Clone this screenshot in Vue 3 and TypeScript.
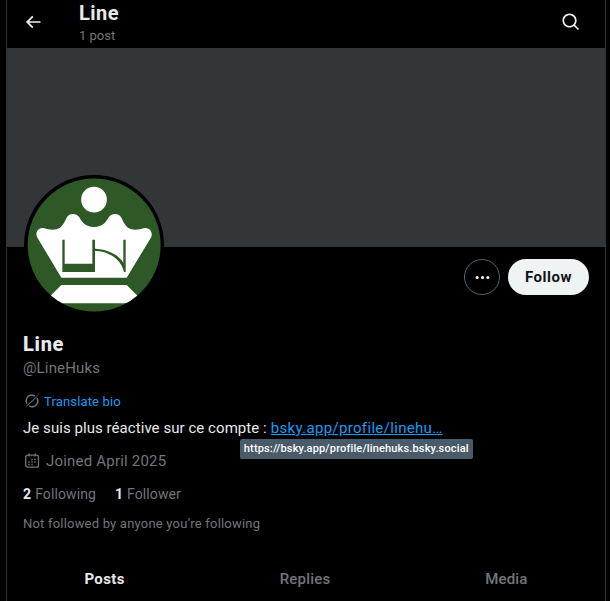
<script setup lang="ts">
interface Stat {
  count: number
  label: string
}

const profile = {
  name: 'Line',
  handle: '@LineHuks',
  posts: '1 post',
  bio: 'Je suis plus réactive sur ce compte :',
  link: 'bsky.app/profile/linehu…',
  url: 'https://bsky.app/profile/linehuks.bsky.social',
  joined: 'Joined April 2025',
}

const stats: Stat[] = [
  { count: 2, label: 'Following' },
  { count: 1, label: 'Follower' },
]

const tabs = ['Posts', 'Replies', 'Media']
const activeTab = 'Posts'
</script>

<template>
  <main class="column">
    <header class="topbar">
      <svg class="back" viewBox="0 0 24 24">
        <path d="M7.414 13l5.043 5.04-1.414 1.42L3.586 12l7.457-7.46 1.414 1.42L7.414 11H21v2H7.414z" />
      </svg>
      <div class="heading">
        <h2 class="heading-name">{{ profile.name }}</h2>
        <div class="heading-count">{{ profile.posts }}</div>
      </div>
      <svg class="search" viewBox="0 0 24 24">
        <path d="M10.25 3.75c-3.59 0-6.5 2.91-6.5 6.5s2.91 6.5 6.5 6.5c1.795 0 3.419-.726 4.596-1.904 1.178-1.177 1.904-2.801 1.904-4.596 0-3.59-2.91-6.5-6.5-6.5zm-8.5 6.5c0-4.694 3.806-8.5 8.5-8.5s8.5 3.806 8.5 8.5c0 1.986-.682 3.815-1.824 5.262l4.781 4.781-1.414 1.414-4.781-4.781c-1.447 1.142-3.276 1.824-5.262 1.824-4.694 0-8.5-3.806-8.5-8.5z" />
      </svg>
    </header>
    <div class="banner"></div>

    <section class="profile">
      <div class="actions-row">
        <svg class="avatar" viewBox="27 30 420 420">
          <defs>
            <clipPath id="avatar-disc"><circle cx="237.5" cy="240" r="199.5" /></clipPath>
          </defs>
          <circle cx="237" cy="240" r="210" fill="#000" />
          <g clip-path="url(#avatar-disc)">
            <rect x="27" y="30" width="420" height="420" fill="#2f5827" />
            <circle cx="237" cy="104" r="38.5" fill="#fff" />
            <path
              fill="#fff"
              d="M139 338L66 216C60 200 71 187 86 189C99 193 112 196 124 193C143 188 148 172 154 160C160 145 182 142 193 157C200 170 210 186 237 186C264 186 274 170 281 157C292 142 314 145 320 160C326 172 331 188 350 193C362 196 375 193 388 189C403 187 414 200 409 216L335 338Z"
            />
            <path fill="#fff" d="M139 360H335L386 411V415H88V411Z" />
            <path fill="#2f5827" d="M142 224H149V296H232V224H240V321H142Z" />
            <path fill="#2f5827" d="M325 224H332V321H327C320 286 284 258 240 258V251C278 252 310 269 325 293Z" />
          </g>
        </svg>
        <div class="actions">
          <button class="more" aria-label="More">
            <svg viewBox="0 0 24 24">
              <circle cx="4.4" cy="12" r="2.2" />
              <circle cx="12" cy="12" r="2.2" />
              <circle cx="19.6" cy="12" r="2.2" />
            </svg>
          </button>
          <button class="follow"><span>Follow</span></button>
        </div>
      </div>

      <h1 class="name"><span>{{ profile.name }}</span></h1>
      <div class="handle"><span>{{ profile.handle }}</span></div>

      <div class="translate">
        <svg viewBox="0 0 16 16">
          <path d="M10.9 3.1A5.6 5.6 0 0 0 3 10.6M5.2 12.9A5.6 5.6 0 0 0 12.9 5.2" />
          <path class="slash" d="M1.2 14.6C3.2 11.6 5 10.2 7 8.6L15 1.2C13 4.2 12 5.2 6.2 10.4" />
        </svg>
        <span>Translate bio</span>
      </div>

      <p class="bio">
        <span class="bio-text">{{ profile.bio }}</span>
        <span class="link-wrap">
          <a class="link">{{ profile.link }}</a>
          <span class="tooltip"><span>{{ profile.url }}</span></span>
        </span>
      </p>

      <div class="joined">
        <svg viewBox="0 0 18 18">
          <rect x="2.7" y="3.2" width="12.8" height="12" rx="2" />
          <path d="M6 1.5V4.5M12.2 1.5V4.5" />
          <path class="dots" d="M8.3 7.5H9.7M11.3 7.5H12.7M5.3 10H6.7M8.3 10H9.7M11.3 10H12.7M5.3 12.5H6.7M8.3 12.5H9.7" />
        </svg>
        <span>{{ profile.joined }}</span>
      </div>

      <div class="stats">
        <div v-for="stat in stats" :key="stat.label" class="stat">
          <b>{{ stat.count }}</b>
          <span>{{ stat.label }}</span>
        </div>
      </div>

      <div class="mutuals"><span>Not followed by anyone you’re following</span></div>
    </section>

    <nav class="tabs">
      <div v-for="tab in tabs" :key="tab" class="tab" :class="{ active: tab === activeTab }">
        <span>{{ tab }}</span>
      </div>
    </nav>
  </main>
</template>

<style>
body {
  background: #000;
  overflow: hidden;
}
</style>

<style scoped>
.column {
  box-sizing: border-box;
  width: 600px;
  height: 601px;
  margin-left: 6px;
  border: solid #2f3336;
  border-width: 0 1px;
  background: #000;
  color: #e7e9ea;
  font-family: Roboto, "Liberation Sans", sans-serif;
  font-size: 15px;
  overflow: hidden;
}
h1, h2, p {
  margin: 0;
}
.topbar {
  display: flex;
  height: 48px;
  box-sizing: border-box;
  padding: 0 24px 0 16px;
}
.back {
  width: 20px;
  height: 20px;
  margin-top: 12px;
  fill: #eff3f4;
}
.heading {
  flex: 1;
  margin-left: 36px;
}
.heading-name {
  font-size: 20px;
  line-height: 24px;
  font-weight: 700;
  margin-top: 1px;
  letter-spacing: 0.5px;
}
.heading-count {
  font-size: 13px;
  line-height: 16px;
  margin-top: 3px;
  color: #71767b;
}
.search {
  width: 20px;
  height: 20px;
  margin-top: 12px;
  fill: #eff3f4;
}
.banner {
  height: 199px;
  background: #333639;
}
.profile {
  padding: 0 16px;
}
.actions-row {
  display: flex;
  justify-content: space-between;
  height: 85px;
}
.avatar {
  width: 140px;
  height: 140px;
  margin: -72px 0 0 1px;
}
.actions {
  display: flex;
  gap: 8px;
  padding-top: 12px;
}
button {
  box-sizing: border-box;
  height: 36px;
  padding: 0;
  border-radius: 18px;
  font-family: inherit;
}
.more {
  display: flex;
  align-items: center;
  justify-content: center;
  width: 36px;
  border: 1px solid #536471;
  background: #000;
}
.more svg {
  width: 17px;
  height: 17px;
  fill: #eff3f4;
}
.follow {
  width: 81px;
  border: 0;
  background: #eff3f4;
  color: #0f1419;
  font-size: 15px;
  font-weight: 700;
  letter-spacing: 0.5px;
}
.name {
  font-size: 20px;
  line-height: 24px;
  font-weight: 800;
  letter-spacing: 0.7px;
}
.handle {
  line-height: 20px;
  margin-top: 2px;
  color: #71767b;
  letter-spacing: 0.15px;
}
.translate {
  display: flex;
  align-items: center;
  gap: 4px;
  height: 16px;
  margin-top: 15px;
  padding-left: 1px;
  color: #1d9bf0;
  font-size: 13px;
  letter-spacing: 0.15px;
}
.translate svg {
  width: 16px;
  height: 16px;
  fill: none;
  stroke: #71767b;
  stroke-width: 1.5;
}
.translate .slash {
  fill: #71767b;
  stroke: none;
}
.bio {
  display: flex;
  gap: 4px;
  height: 20px;
  line-height: 20px;
  margin-top: 9px;
  white-space: nowrap;
}
.bio-text {
  letter-spacing: 0.055px;
}
.link-wrap {
  position: relative;
}
.link {
  color: #1d9bf0;
  text-decoration: underline;
  letter-spacing: 0.33px;
}
.tooltip {
  position: absolute;
  top: 21px;
  left: -31px;
  box-sizing: border-box;
  width: 233px;
  height: 20px;
  border-radius: 2px;
  background: #495a69;
  color: #fff;
  font-size: 11px;
  font-weight: 500;
  line-height: 19px;
  text-align: center;
  letter-spacing: 0.15px;
}
.joined {
  display: flex;
  align-items: center;
  gap: 5px;
  height: 20px;
  margin-top: 13px;
  color: #71767b;
  letter-spacing: 0.2px;
}
.joined svg {
  width: 18px;
  height: 18px;
  fill: none;
  stroke: #71767b;
  stroke-width: 1.3;
}
.joined .dots {
  stroke-width: 1.4;
}
.stats {
  display: flex;
  gap: 19px;
  height: 20px;
  line-height: 20px;
  margin-top: 13px;
  font-size: 14px;
  letter-spacing: 0.1px;
}
.stat {
  display: flex;
  gap: 4px;
}
.stat span {
  color: #71767b;
}
.mutuals {
  height: 16px;
  line-height: 16px;
  margin-top: 12px;
  color: #71767b;
  font-size: 13px;
  letter-spacing: 0.2px;
}
.tabs {
  display: flex;
  height: 53px;
  margin-top: 20px;
}
.tab {
  display: flex;
  flex: 1 1 auto;
  align-items: center;
  justify-content: center;
  color: #71767b;
  font-weight: 500;
  letter-spacing: 0.2px;
}
.tab.active {
  color: #e7e9ea;
  font-weight: 700;
  letter-spacing: 0.4px;
}
</style>
